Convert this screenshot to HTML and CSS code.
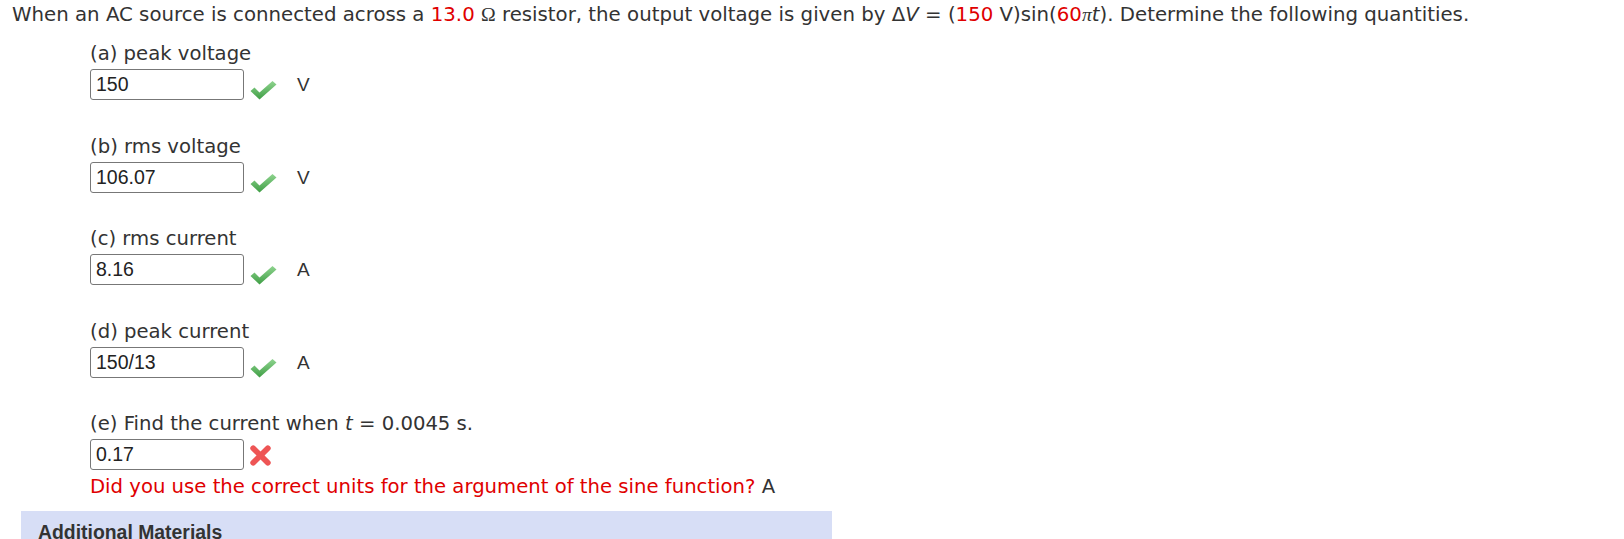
FILE: index.html
```html
<!DOCTYPE html>
<html>
<head>
<meta charset="utf-8">
<link rel="stylesheet" href="styles.css">
</head>
<body>
<div class="question">
  <p class="stem">When an AC source is connected across a <span class="red">13.0</span> <span class="serif">Ω</span> resistor, the output voltage is given by Δ<i>V</i> = (<span class="red">150</span> V)sin(<span class="red">60</span><span class="serif pi">π</span><i>t</i>). Determine the following quantities.</p>
  <div class="parts">
    <div class="part">
      <div class="label">(a) peak voltage</div>
      <div class="row">
        <div class="input">150</div>
        <svg class="check" viewBox="0 0 28 20" width="29" height="20"><defs><linearGradient id="g1" x1="0" y1="0" x2="0" y2="1"><stop offset="0" stop-color="#8fd48f"/><stop offset="1" stop-color="#3f9e45"/></linearGradient></defs><path d="M1 11 L5 7.5 L10 12.5 L23 1 L27 4.5 L10 19.5 Z" fill="url(#g1)"/></svg>
        <span class="unit">V</span>
      </div>
    </div>
    <div class="part">
      <div class="label">(b) rms voltage</div>
      <div class="row">
        <div class="input">106.07</div>
        <svg class="check" viewBox="0 0 28 20" width="29" height="20"><path d="M1 11 L5 7.5 L10 12.5 L23 1 L27 4.5 L10 19.5 Z" fill="url(#g1)"/></svg>
        <span class="unit">V</span>
      </div>
    </div>
    <div class="part">
      <div class="label">(c) rms current</div>
      <div class="row">
        <div class="input">8.16</div>
        <svg class="check" viewBox="0 0 28 20" width="29" height="20"><path d="M1 11 L5 7.5 L10 12.5 L23 1 L27 4.5 L10 19.5 Z" fill="url(#g1)"/></svg>
        <span class="unit">A</span>
      </div>
    </div>
    <div class="part">
      <div class="label">(d) peak current</div>
      <div class="row">
        <div class="input">150/13</div>
        <svg class="check" viewBox="0 0 28 20" width="29" height="20"><path d="M1 11 L5 7.5 L10 12.5 L23 1 L27 4.5 L10 19.5 Z" fill="url(#g1)"/></svg>
        <span class="unit">A</span>
      </div>
    </div>
    <div class="part last">
      <div class="label">(e) Find the current when <i>t</i> = 0.0045 s.</div>
      <div class="row">
        <div class="input">0.17</div>
        <svg class="cross" viewBox="0 0 22 22" width="23" height="23"><g stroke="#ee5555" stroke-width="5.5" stroke-linecap="round"><line x1="4" y1="4" x2="18" y2="18"/><line x1="18" y1="4" x2="4" y2="18"/></g></svg>
      </div>
      <div class="feedback"><span class="red">Did you use the correct units for the argument of the sine function?</span> A</div>
    </div>
  </div>
</div>
<div class="materials">Additional Materials</div>
</body>
</html>
```
FILE: styles.css
```css
html, body {
  margin: 0;
  padding: 0;
  background: #fff;
}
body {
  font-family: "DejaVu Sans", Verdana, sans-serif;
  font-size: 19.65px;
  color: #333;
}
.question {
  padding-left: 12px;
}
.stem {
  margin: 0;
  line-height: 29px;
  font-size: 19.75px;
}
.red {
  color: #e00000;
}
.serif {
  font-family: "Liberation Serif", serif;
}
.pi {
  font-style: italic;
}
.parts {
  margin-left: 78px;
  padding-top: 11px;
}
.part {
  margin-bottom: 32.6px;
}
.part.last {
  margin-bottom: 0;
}
.label {
  line-height: 27px;
}
.row {
  display: flex;
  align-items: flex-start;
  margin-top: 2px;
}
.input {
  box-sizing: border-box;
  width: 154px;
  height: 31px;
  border: 1px solid #777;
  border-radius: 3px;
  font-family: "Liberation Sans", Arial, sans-serif;
  font-size: 19.5px;
  line-height: 29px;
  padding-left: 5px;
  color: #222;
}
.check {
  margin-left: 5px;
  margin-top: 11px;
}
.cross {
  margin-left: 5px;
  margin-top: 5px;
}
.unit {
  font-family: "Liberation Sans", Arial, sans-serif;
  font-size: 19px;
  margin-left: 19px;
  line-height: 31px;
}
.feedback {
  line-height: 27px;
  margin-top: 2.5px;
}
.materials {
  margin: 11px 0 0 21px;
  width: 811px;
  box-sizing: border-box;
  background: #d7def6;
  padding: 10px 17px 20px;
  font-family: "Liberation Sans", Arial, sans-serif;
  font-weight: bold;
  font-size: 19.4px;
  line-height: 23px;
  color: #333;
}
```
